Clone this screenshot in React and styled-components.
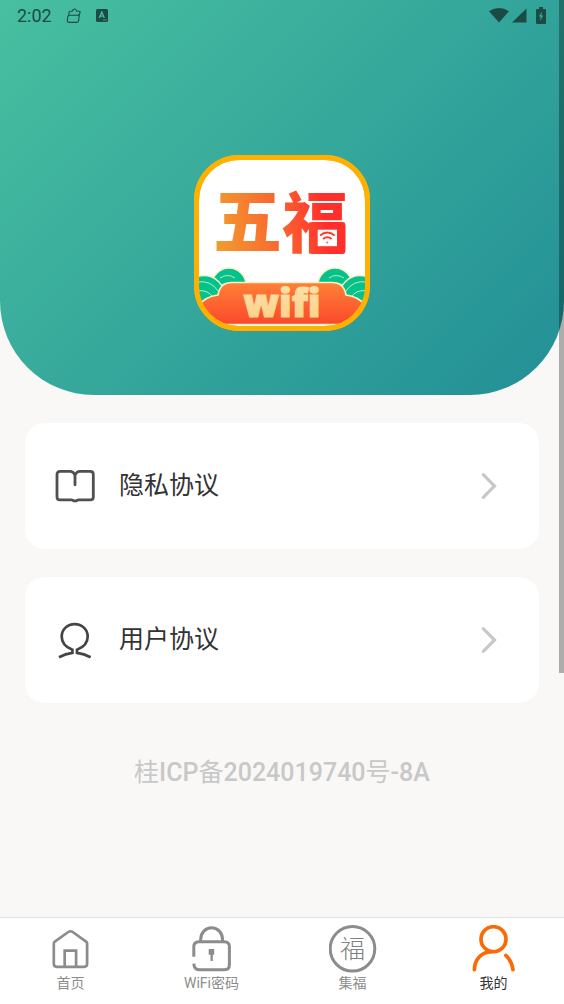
import React from 'react';
import styled, { createGlobalStyle } from 'styled-components';

const GlobalStyle = createGlobalStyle`
  * {
    box-sizing: border-box;
  }
  body {
    margin: 0;
    background-color: #f9f8f6;
    font-family: Roboto, 'Noto Sans CJK SC', sans-serif;
    color: #333;
  }
`;

const Page = styled.div`
  min-height: 100vh;
  display: flex;
  flex-direction: column;
`;

const Header = styled.header`
  background: linear-gradient(135deg, #48bfa0, #228f96);
  border-radius: 0 0 94px 94px;
  padding-bottom: 64px;
  display: flex;
  flex-direction: column;
  align-items: center;
  gap: 123px;
`;

const StatusBar = styled.div`
  width: 100%;
  height: 32px;
  padding: 0 18px 0 17px;
  display: flex;
  align-items: center;
  justify-content: space-between;
  color: #1b4b45;
  font-size: 18px;
  line-height: 32px;
`;

const StatusGroup = styled.div`
  display: flex;
  align-items: center;
  gap: ${props => props.$gap}px;
  svg {
    display: block;
  }
`;

const Logo = styled.svg`
  display: block;
  width: 176px;
  height: 176px;
`;

const Content = styled.main`
  flex: 1;
  padding: 28px 25px;
  display: flex;
  flex-direction: column;
  gap: 28px;
`;

const Card = styled.a`
  height: 126px;
  padding: 0 42px 0 30px;
  display: flex;
  align-items: center;
  gap: 24px;
  background-color: #fff;
  border-radius: 20px;
  color: #333;
  text-decoration: none;
  svg {
    flex: none;
  }
`;

const CardLabel = styled.span`
  flex: 1;
  font-size: 25px;
  line-height: 36px;
`;

const Record = styled.p`
  margin: 24px 0 0;
  text-align: center;
  color: #c8c8c8;
  font-size: 25px;
  line-height: 36px;
  b {
    font-weight: 500;
  }
`;

const TabBar = styled.nav`
  height: 87px;
  padding-top: 7px;
  display: grid;
  grid-template-columns: repeat(4, 1fr);
  background-color: #fff;
  border-top: 1px solid #e2e2e2;
`;

const Tab = styled.a`
  display: flex;
  flex-direction: column;
  align-items: center;
  color: ${props => (props.$active ? '#333' : '#8c8c8c')};
  font-size: 14px;
  line-height: 20px;
  text-decoration: none;
`;

// overlays the page the way a mobile scrollbar does
const ScrollThumb = styled.div`
  position: fixed;
  top: 0;
  right: 0;
  width: 5px;
  height: 67vh;
  background-color: rgba(0, 0, 0, 0.3);
`;

const TabSvg = ({ children, color = '#8c8c8c', width = 3 }) => (
  <svg width="48" height="48" viewBox="0.8 0 48 48" fill="none" stroke={color} strokeWidth={width} aria-hidden="true">
    {children}
  </svg>
);

const HomeIcon = () => (
  <TabSvg width={2.7}>
    <path d="M7.6 18.500q0-1.200 1-1.900L22.100 7q2.200-1.500 4.400 0L39.900 16.600q1 .7 1 1.900v20.300q0 3-3 3H10.600q-3 0-3-3z" />
    <path d="M18.500 41.500V25.700h11.400v15.800" />
  </TabSvg>
);

const LockIcon = () => (
  <TabSvg>
    <path d="M13.500 16.700V14a10.900 11.200 0 0 1 21.800 0v2.700" />
    <path d="M6.600 31.800V21.700q0-5 5-5h25.600q5 0 5 5v18q0 5-5 5H11.600q-4.600 0-5-6" />
    <path d="M21.500 24H27v5.700h-1.400V36h-2.300v-6.300h-1.800z" fill="#8c8c8c" stroke="none" />
  </TabSvg>
);

const FuIcon = () => (
  <TabSvg width={3}>
    <circle cx="24.300" cy="23.800" r="22.300" />
    <text x="24.300" y="33" textAnchor="middle" fontSize="25" fontWeight="300" fill="#808080" stroke="none">福</text>
  </TabSvg>
);

const MineIcon = () => (
  <TabSvg color="#fa6b05" width={3.7}>
    <circle cx="24.300" cy="14.200" r="12.500" />
    <path d="M5.200 44.700C5.400 34.500 12 27 22.500 26.600M36.600 30.400Q42.500 35.500 43.800 44.700" strokeLinecap="round" />
  </TabSvg>
);

const BookIcon = () => (
  <svg width="40" height="40" viewBox="0 0 40 40" fill="none" stroke="#505050" strokeWidth="2.800" strokeLinecap="round" strokeLinejoin="round" aria-hidden="true">
    <path d="M20 18.800V9.500q-1.500-4.100-5-4.100H5q-3 0-3 3v22.500q0 3 3 3h11.500q1.500 0 2.200 1h2.600q.7-1 2.200-1H35.300q3 0 3-3v-22.500q0-3-3-3H25q-3.500 0-5 4.100" />
  </svg>
);

const UserIcon = () => (
  <svg width="40" height="40" viewBox="0 0 40 40" fill="none" stroke="#444" strokeWidth="2.700" aria-hidden="true">
    <path d="M4 37.200Q10.500 33.600 17.400 32.800V29.800C10.500 27.200 6.700 22 6.700 16.600C6.700 9.300 12.500 4.100 19.700 4.100S32.700 9.300 32.700 16.600C32.700 22 28.900 27.200 22 29.800V32.800Q29 33.600 35.600 37.200" />
  </svg>
);

const Chevron = () => (
  <svg width="16" height="28" viewBox="0 0 16 28" fill="none" stroke="#c8c8c8" strokeWidth="3.200" strokeLinecap="round" aria-hidden="true">
    <path d="M2.300 2.700L13.500 14L2.300 25.300" />
  </svg>
);

const Cloud = () => (
  <g stroke="#fdf0c4" strokeWidth="1.500">
    <circle cx="35" cy="130" r="17" fill="#04c28c" />
    <path d="M26 123q8-5 15 0M24 131q8-4 14-1" fill="none" strokeWidth=".8" />
    <circle cx="10" cy="141" r="20.500" fill="#04c28c" />
    <path d="M3 127q14-2 21 9M3 136q10-2 16 6" fill="none" strokeWidth=".8" />
  </g>
);

const AppLogo = () => (
  <Logo viewBox="0 0 176 176" role="img" aria-label="五福wifi">
    <defs>
      <linearGradient id="title" gradientUnits="userSpaceOnUse" x1="24" y1="80" x2="150" y2="60">
        <stop offset="0" stopColor="#f19a2e" />
        <stop offset=".5" stopColor="#fa6430" />
        <stop offset=".85" stopColor="#ff302b" />
      </linearGradient>
      <linearGradient id="banner" x1="0" y1="0" x2="0" y2="1">
        <stop offset="0" stopColor="#ff8136" />
        <stop offset="1" stopColor="#fb482b" />
      </linearGradient>
      <linearGradient id="wifi" x1="0" y1="0" x2="0" y2="1">
        <stop offset="0" stopColor="#fce6b0" />
        <stop offset="1" stopColor="#fbce85" />
      </linearGradient>
      <clipPath id="inner">
        <rect x="4" y="4" width="168" height="168" rx="41" />
      </clipPath>
    </defs>
    <rect width="176" height="176" rx="45" fill="#ffb000" />
    <rect x="5" y="5" width="166" height="166" rx="40" fill="#fff" />
    <g fontFamily="'Noto Sans CJK SC'" fontWeight="900" fill="url(#title)">
      <text x="19" y="92" fontSize="69">五</text>
      <text x="88" y="92" fontSize="66">福</text>
    </g>
    <rect x="115" y="67" width="36.500" height="32" rx="4" fill="url(#title)" />
    <rect x="123.700" y="74.700" width="19.300" height="16.500" fill="#fff" />
    <g fill="none" stroke="#ff3b2d" strokeWidth="2">
      <path d="M126 80.500q7.300-6 14.600 0M129 84q4.300-3.500 8.600 0" />
      <circle cx="133.300" cy="87.500" r=".6" strokeWidth="1" />
    </g>
    <g clipPath="url(#inner)">
      <Cloud />
      <g transform="translate(176 0) scale(-1 1)">
        <Cloud />
      </g>
      <path
        d="M0 158Q7 142 24 140Q26 127.500 38 127.500H138Q150 127.500 152 140Q169 142 176 158V169.500H0z"
        fill="url(#banner)"
        stroke="#fdf0c4"
        strokeWidth="1.600"
      />
    </g>
    <rect x="2.500" y="2.500" width="171" height="171" rx="42.500" fill="none" stroke="#ffb000" strokeWidth="5" />
    <text x="88" y="161.500" textAnchor="middle" fontFamily="'Noto Sans', 'Open Sans'" fontWeight="900" fontSize="39" fill="url(#wifi)" stroke="url(#wifi)" strokeWidth="1.200">wifi</text>
  </Logo>
);

const Status = () => (
  <StatusBar>
    <StatusGroup $gap={14}>
      <span>2:02</span>
      <svg width="16" height="16" viewBox="0 0 16 16" fill="none" stroke="currentColor" strokeWidth="1.100" aria-hidden="true">
        <path d="M2.700 7.200L3 4.500Q3.200 3.300 4.500 3.200L6.500 3Q7.200 1 8.800 1T10.500 3L13 3.200Q14.500 3.500 14 5.200Q13.500 6.900 12 7.100L2.700 7.200Q1.700 8 1.600 10L1.300 12.500Q1.300 14.400 3.300 14.400H10.500Q12.400 14.400 12.700 12.500L13.300 6.500" />
      </svg>
      <svg width="12" height="14" viewBox="0 0 12 14" aria-hidden="true">
        <rect width="12" height="13" rx="1.500" fill="currentColor" />
        <path d="M3.300 9L5.800 3L8.300 9M4.200 7.200H7.500" fill="none" stroke="#48b9a0" strokeWidth="1.300" />
        <path d="M7 11h3.500" stroke="#48b9a0" strokeWidth=".7" />
      </svg>
    </StatusGroup>
    <StatusGroup $gap={3}>
      <svg width="20" height="16" viewBox="0 0 20 16" fill="currentColor" aria-hidden="true">
        <path d="M0 3.200Q10-3.200 20 3.200L10 14.500z" />
      </svg>
      <svg width="21" height="16" viewBox="0 0 21 16" fill="currentColor" aria-hidden="true">
        <path d="M14.500 .5V14.500H0z" />
      </svg>
      <svg width="10" height="18" viewBox="0 0 10 18" aria-hidden="true">
        <path d="M3 0H7V2H9Q10 2 10 3V16Q10 17 9 17H1Q0 17 0 16V3Q0 2 1 2H3z" fill="currentColor" />
        <path d="M6 4.700L2.800 9.500H4.700L4 14L7.300 8.500H5.400z" fill="#36a99c" />
      </svg>
    </StatusGroup>
  </StatusBar>
);

const tabs = [
  { label: '首页', icon: HomeIcon },
  { label: 'WiFi密码', icon: LockIcon },
  { label: '集福', icon: FuIcon },
  { label: '我的', icon: MineIcon, active: true },
];

function App() {
  return (
    <Page>
      <GlobalStyle />
      <Header>
        <Status />
        <AppLogo />
      </Header>
      <Content>
        <Card href="#privacy">
          <BookIcon />
          <CardLabel>隐私协议</CardLabel>
          <Chevron />
        </Card>
        <Card href="#agreement">
          <UserIcon />
          <CardLabel>用户协议</CardLabel>
          <Chevron />
        </Card>
        <Record>
          桂<b>ICP</b>备<b>2024019740</b>号<b>-8A</b>
        </Record>
      </Content>
      <TabBar>
        {tabs.map(({ label, icon: Icon, active }) => (
          <Tab key={label} href="#" $active={active}>
            <Icon />
            {label}
          </Tab>
        ))}
      </TabBar>
      <ScrollThumb />
    </Page>
  );
}

export default App;
